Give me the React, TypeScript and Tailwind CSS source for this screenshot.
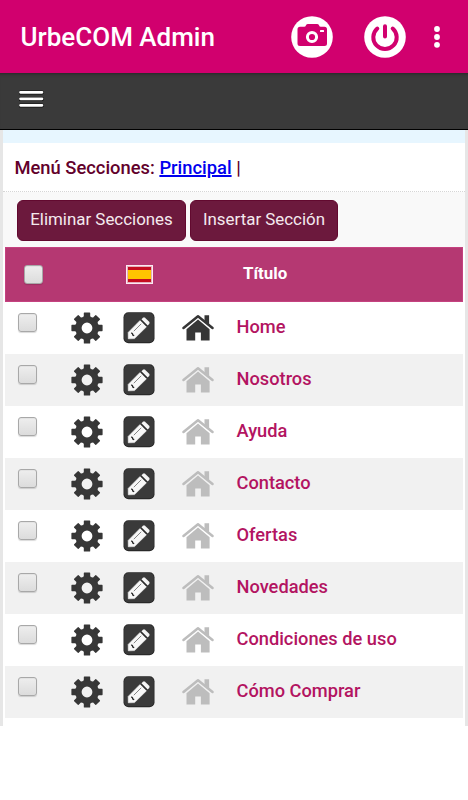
import React from "react";

const sections = [
  "Home",
  "Nosotros",
  "Ayuda",
  "Contacto",
  "Ofertas",
  "Novedades",
  "Condiciones de uso",
  "Cómo Comprar",
];

const teeth = [0, 45, 90, 135, 180, 225, 270, 315];

function Gear() {
  return (
    <svg className="block h-8 w-8" viewBox="-16 -16 32 32">
      <circle r="8.5" fill="none" stroke="#383838" strokeWidth="6.2" />
      {teeth.map((a) => (
        <path
          key={a}
          d="M-4.6-10.4L-3.2-11.8V-15Q-3.2-15.6-2.6-15.6H2.6Q3.2-15.6 3.2-15V-11.8L4.6-10.4Z"
          fill="#363636"
          transform={`rotate(${a})`}
        />
      ))}
    </svg>
  );
}

function Pencil() {
  return (
    <svg className="block h-8 w-8" viewBox="0 0 32 32">
      <rect x=".5" y=".3" width="31" height="31" rx="5" fill="#242424" />
      <rect x="1.2" y="1.1" width="29.6" height="29.2" rx="4.2" fill="#3a3a3a" />
      <path d="M5.2 20.4L17.3 8.2L23.8 14.5L11.5 26.6L5.3 26.8Z" fill="#f7f7f7" stroke="#f7f7f7" strokeWidth=".6" strokeLinejoin="round" />
      <path d="M18.4 7.2L20 5.7Q21 4.9 22 5.7L26.2 9.8Q27 10.9 26.2 11.9L24.6 13.5Z" fill="#f5f5f5" />
      <path d="M17.6 7.9L24 14.2" stroke="#2b2b2b" strokeWidth="1.3" />
      <path d="M10.8 19.2L18.2 11.8" stroke="#666" strokeWidth=".8" />
      <path d="M8.3 20.7L9.5 21.8L9.8 23L11.2 23.6" fill="none" stroke="#222" strokeWidth="1.3" />
    </svg>
  );
}

function House({ active }: { active: boolean }) {
  const color = active ? "#363636" : "#bdbdbd";
  return (
    <svg className="block h-8 w-8" viewBox="0 0 32 32">
      <path d="M1.5 16L16 4.2L30.5 16" fill="none" stroke={color} strokeWidth="2.5" strokeLinecap="round" strokeLinejoin="round" />
      <path d="M22.5 3.2H27.1V13.5L22.5 9.8Z" fill={color} />
      <path d="M16 7.6L27.6 17.2V28.6H18.9V20.5H13.2V28.6H4.5V17.2Z" fill={color} />
    </svg>
  );
}

function Box() {
  return (
    <span className="block h-[19px] w-[18.5px] rounded-[3px] border border-[#a8a8a8] bg-linear-to-b from-[#eeeeee] to-[#dcdcdc] shadow-[0_1px_1px_rgba(0,0,0,0.15),inset_0_1px_0_#e3e3e3]" />
  );
}

export default function App() {
  return (
    <div className="h-[800px] w-[468px] overflow-hidden bg-white font-['Roboto',sans-serif]">
      <header className="flex h-[73px] items-center bg-[#d1006e]">
        <h1 className="ml-[20.5px] w-[270.5px] whitespace-nowrap text-[26px] leading-8 font-medium text-white">
          UrbeCOM Admin
        </h1>
        <svg className="h-[42px] w-[42px]" viewBox="0 0 42 42">
          <circle cx="21" cy="21" r="20.8" fill="#fff" />
          <path d="M9 10.8H13.2Q14.5 10.7 15 9.2Q15.5 8 17 8H26Q27.5 8 28 9.2Q28.5 10.7 29.8 10.8H33.5Q36 10.8 36 13.5V27.5Q36 30 33.5 30H9Q6.5 30 6.5 27.5V13.5Q6.5 10.8 9 10.8Z" fill="#d1006e" />
          <circle cx="21" cy="21" r="4.6" fill="none" stroke="#fff" strokeWidth="3" />
          <rect x="29" y="14" width="4" height="2" rx=".5" fill="#fff" />
        </svg>
        <svg className="ml-[31px] h-[42px] w-[42px]" viewBox="0 0 42 42">
          <circle cx="21" cy="21" r="20.8" fill="#fff" />
          <path d="M13.3 12.5A11.7 11.7 0 1 0 28.7 12.5M21 10.3V20.5" fill="none" stroke="#d1006e" strokeWidth="4" strokeLinecap="round" />
        </svg>
        <svg className="ml-[26px] h-6 w-[10px]" viewBox="0 0 10 24">
          <circle cx="5" cy="4" r="2.9" fill="#fff" />
          <circle cx="5" cy="12" r="2.9" fill="#fff" />
          <circle cx="5" cy="19.8" r="2.9" fill="#fff" />
        </svg>
      </header>

      <nav className="h-[57px] border-b border-black bg-[#3a3a3a] pt-[17px] pl-[19px] shadow-[inset_0_4px_4px_-4px_rgba(0,0,0,0.5)]">
        <svg className="block h-[18px] w-[25px]" viewBox="0 0 25 18">
          <path d="M1.5 2.5H23M1.5 9H23M1.5 15.5H23" stroke="#111" strokeWidth="3.9" strokeLinecap="round" />
          <path d="M1.5 2.3H23M1.5 8.8H23M1.5 15.3H23" stroke="#fff" strokeWidth="2.7" strokeLinecap="round" />
        </svg>
      </nav>

      <main className="h-[596px] border-r-[3px] border-l-[3px] border-[#e6e6e6] bg-white">
        <div className="h-[13px] bg-[#e7f6ff]" />
        <div className="flex h-[49px] items-center border-b border-dotted border-[#d6d6d6] pl-[11.5px]">
          <p className="whitespace-nowrap pt-px text-[18.35px] leading-6 font-medium text-[#62002b]">
            Menú Secciones: <a className="text-[#0000ee] underline decoration-[1.5px]" href="#">Principal</a> |
          </p>
        </div>
        <div className="flex h-[55px] gap-1 bg-[#f9f9f9] pt-[8px] pl-[14px] text-[16.9px] leading-[36px] text-[#f4e9ee]">
          <button className="h-[41px] w-[169px] rounded-[6px] border border-[#62092f] bg-[#6c193d] pb-[4px] whitespace-nowrap">Eliminar Secciones</button>
          <button className="h-[41px] w-[148px] rounded-[6px] border border-[#62092f] bg-[#6c193d] pb-[4px] whitespace-nowrap">Insertar Sección</button>
        </div>
        <div className="mr-[2px] ml-[2px]">
          <div className="flex h-[55px] items-start border border-[#c54280] bg-[#b53872]">
            <div className="mt-[17px] ml-[18px] w-[102px]"><Box /></div>
            <div className="mt-[17px] h-[19px] w-[27px] border border-[#fbeaf2] bg-[linear-gradient(#c50d20_0_24%,#ffc500_24%_76%,#c50d20_76%)] shadow-[inset_0_0_0_1px_#e5aebe]" />
            <div className="mt-[13px] ml-[90px] text-[16.9px] leading-6 font-bold text-white">Título</div>
          </div>
          {sections.map((title, i) => (
            <div key={title} className="flex h-[52px] items-start odd:bg-[#f1f1f1] even:bg-white">
              <div className="mt-[11px] ml-[13px] w-[53px]"><Box /></div>
              <div className="mt-[10px] w-[52px]"><Gear /></div>
              <div className="mt-[10px] w-[58px]"><Pencil /></div>
              <div className="mt-[10px] w-[51px] pl-[0.5px]"><House active={i === 0} /></div>
              <div className="mt-[13px] ml-[4.5px] text-[18.25px] leading-6 font-medium whitespace-nowrap text-[#b31461]">{title}</div>
            </div>
          ))}
        </div>
      </main>
    </div>
  );
}
